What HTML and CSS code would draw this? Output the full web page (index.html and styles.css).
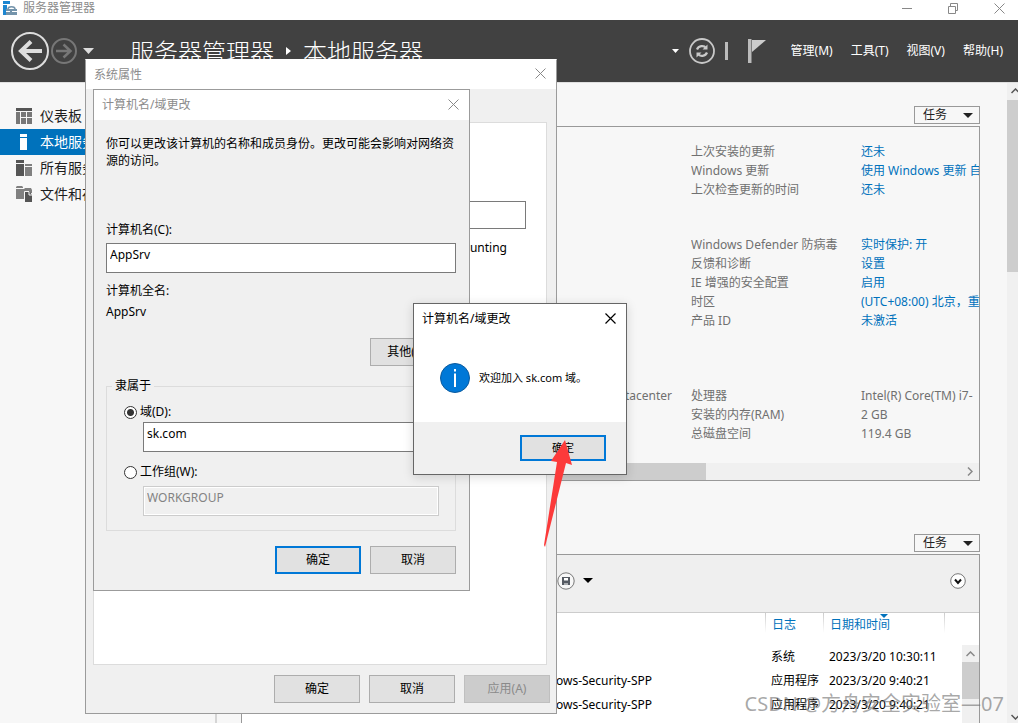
FILE: index.html
```html
<!DOCTYPE html>
<html lang="zh-CN">
<head>
<meta charset="utf-8">
<title>服务器管理器</title>
<link rel="stylesheet" href="styles.css">
</head>
<body>
<div class="app">
  <header class="titlebar">
    <svg class="app-icon" width="15" height="14" viewBox="0 0 15 14"><path d="M0 0h7v3H0zM0 4h4v10H0z" fill="#1c86d1"/><path d="M3 8h11v6H3z" fill="#7494ab"/><path d="M5 8c0-3 7-3 7 0" fill="none" stroke="#7494ab" stroke-width="1.5"/><path d="M3 10.5h4M9 10.5h5" stroke="#fff"/></svg>
    <span class="titlebar-text">服务器管理器</span>
    <div class="window-controls">
      <button type="button" aria-label="最小化"><svg width="11" height="11" viewBox="0 0 11 11"><path d="M0 5.5h10" stroke="#888"/></svg></button>
      <button type="button" aria-label="还原"><svg width="11" height="11" viewBox="0 0 11 11" fill="none" stroke="#888"><path d="M.5 3.500h7v7h-7zM2.500 3V.5h7v7H8"/></svg></button>
      <button type="button" aria-label="关闭"><svg width="11" height="11" viewBox="0 0 11 11"><path d="M.5.5l10 10M10.500.5l-10 10" stroke="#888"/></svg></button>
    </div>
  </header>

  <div class="banner">
    <div class="nav-buttons">
      <button type="button" aria-label="后退"><svg width="40" height="40" viewBox="0 0 40 40" fill="none" stroke="#ddd"><circle cx="20" cy="20" r="18" stroke-width="2"/><path d="M32 20H11" stroke-width="4"/><path d="M21 10.500L11 20l10 9.500" stroke-width="4"/></svg></button>
      <button type="button" aria-label="前进"><svg width="26" height="26" viewBox="0 0 26 26" fill="none" stroke="#777"><circle cx="13" cy="13" r="12" stroke-width="2"/><path d="M5 13h14M12.500 6.500l7 6.500-7 6.500" stroke-width="2.500"/></svg></button>
      <button type="button" aria-label="历史记录"><svg width="11" height="6" viewBox="0 0 11 6"><path d="M0 0h11L5.500 6z" fill="#ddd"/></svg></button>
    </div>
    <h1 class="crumbs"><span>服务器管理器</span><svg width="5" height="8" viewBox="0 0 5 8"><path d="M0 0l5 4-5 4z" fill="#fff"/></svg><span>本地服务器</span></h1>
    <div class="banner-tools">
      <svg width="7" height="4" viewBox="0 0 7 4"><path d="M0 0h7L3.500 4z" fill="#fff"/></svg>
      <button type="button" aria-label="刷新"><svg width="26" height="26" viewBox="0 0 26 26" fill="none" stroke="#c8c8c8"><circle cx="13" cy="13" r="12" stroke-width="1.800"/><path d="M8 11.500c1.500-4 7-4.500 9-1.500M18 14.500c-1.500 4-7 4.500-9 1.500" stroke-width="2.200"/><path d="M18.500 6.500v5h-5zM7.500 19.500v-5h5z" fill="#c8c8c8" stroke="none"/></svg></button>
      <span class="tool-divider"></span>
      <button type="button" aria-label="通知"><svg width="18" height="24" viewBox="0 0 18 24"><path d="M0 0h3.500v24H0z" fill="#bbb"/><path d="M4 1h14L4 13z" fill="#ccc"/></svg></button>
    </div>
    <nav class="menu">
      <button type="button">管理(M)</button>
      <button type="button">工具(T)</button>
      <button type="button">视图(V)</button>
      <button type="button">帮助(H)</button>
    </nav>
  </div>

  <div class="workspace">
    <nav class="sidebar">
      <a href="#dashboard"><svg width="16" height="16" viewBox="0 0 16 16"><path d="M0 0h16v3H0z" fill="#555"/><path d="M0 4h4v12H0zM5 4h5v5H5zM11 4h5v5h-5zM5 10h5v6H5zM11 10h5v6h-5z" fill="#777"/></svg>仪表板</a>
      <a class="selected" href="#local"><svg width="16" height="16" viewBox="0 0 16 16" fill="#fff"><path d="M4 0h7v3H4zM4 4h7v12H4z"/></svg>本地服务器</a>
      <a href="#all"><svg width="16" height="16" viewBox="0 0 16 16"><path d="M0 0h8v3H0zM0 4h8v12H0z" fill="#555"/><path d="M9 4h7v2H9zM9 7h7v9H9z" fill="#808080"/></svg>所有服务器</a>
      <a href="#files"><svg width="16" height="16" viewBox="0 0 16 16"><path d="M0 1l1-1h5l1 1v1H0zM0 3h8l1-1h6l1 2v3H8v6H0z" fill="#808080"/><path d="M9 6h5l2 3v7H9z" fill="#555"/><path d="M13 6v3h3M8.500 13V5.500H13" fill="none" stroke="#f7f7f7"/></svg>文件和存储服务</a>
    </nav>

    <main class="content">
      <button type="button" class="tasks">任务<svg width="10" height="5" viewBox="0 0 10 5"><path d="M0 0h10L5 5z" fill="#222"/></svg></button>
      <section class="panel">
        <div class="properties">
          <div class="prop-group">
            <span></span><span>上次安装的更新</span><a href="#u">还未</a>
            <span></span><span>Windows 更新</span><a href="#w">使用 Windows 更新 自</a>
            <span></span><span>上次检查更新的时间</span><a href="#c">还未</a>
          </div>
          <div class="prop-group">
            <span></span><span>Windows Defender 防病毒</span><a href="#d">实时保护: 开</a>
            <span></span><span>反馈和诊断</span><a href="#f">设置</a>
            <span></span><span>IE 增强的安全配置</span><a href="#i">启用</a>
            <span></span><span>时区</span><a href="#t">(UTC+08:00) 北京，重</a>
            <span></span><span>产品 ID</span><a href="#p">未激活</a>
          </div>
          <div class="prop-group">
            <span class="os">Datacenter</span><span>处理器</span><span>Intel(R) Core(TM) i7-</span>
            <span></span><span>安装的内存(RAM)</span><span>2 GB</span>
            <span></span><span>总磁盘空间</span><span>119.4 GB</span>
          </div>
        </div>
        <div class="hscroll"><span class="hthumb"></span><svg width="6" height="9" viewBox="0 0 6 9"><path d="M1 .5l4 4-4 4" fill="none" stroke="#888" stroke-width="1.500"/></svg></div>
      </section>

      <button type="button" class="tasks tasks-events">任务<svg width="10" height="5" viewBox="0 0 10 5"><path d="M0 0h10L5 5z" fill="#222"/></svg></button>
      <section class="panel events">
        <div class="toolbar">
          <button type="button" aria-label="保存查询"><svg width="18" height="18" viewBox="0 0 18 18"><circle cx="9" cy="9" r="8.200" fill="#f7f7f7" stroke="#777"/><path d="M5 5h8v8H5z" fill="#555a62"/><path d="M7 6h4v2.500H7zM7.500 11h1v2h-1zM9.500 11h1v2h-1z" fill="#fff"/></svg></button>
          <button type="button" aria-label="查询选项"><svg width="10" height="5" viewBox="0 0 10 5"><path d="M0 0h10L5 5z" fill="#000"/></svg></button>
          <button type="button" class="expand" aria-label="展开"><svg width="16" height="16" viewBox="0 0 16 16"><circle cx="8" cy="8" r="7.300" fill="#fff" stroke="#777"/><path d="M5 6.500l3 3.500 3-3.500" fill="none" stroke="#111" stroke-width="2"/></svg></button>
        </div>
        <div class="event-area">
          <table class="event-table">
            <thead><tr><th class="source"></th><th class="log">日志</th><th class="date">日期和时间<svg class="sort" width="8" height="4" viewBox="0 0 8 4"><path d="M0 0h8L4 4z" fill="#0072bc"/></svg></th><th></th></tr></thead>
            <tbody>
              <tr><td></td><td>系统</td><td>2023/3/20 10:30:11</td><td></td></tr>
              <tr><td>Windows-Security-SPP</td><td>应用程序</td><td>2023/3/20 9:40:21</td><td></td></tr>
              <tr><td>Windows-Security-SPP</td><td>应用程序</td><td>2023/3/20 9:40:21</td><td></td></tr>
            </tbody>
          </table>
          <div class="vscroll"><svg width="9" height="6" viewBox="0 0 9 6"><path d="M.5 5l4-4 4 4" fill="none" stroke="#888" stroke-width="1.500"/></svg><span class="vthumb"></span></div>
        </div>
      </section>
    </main>

    <div class="page-scroll">
      <svg width="9" height="6" viewBox="0 0 9 6"><path d="M.5 5l4-4 4 4" fill="none" stroke="#555" stroke-width="1.500"/></svg>
      <span class="page-thumb"></span>
      <svg width="9" height="6" viewBox="0 0 9 6"><path d="M.5 1l4 4 4-4" fill="none" stroke="#555" stroke-width="1.500"/></svg>
    </div>
  </div>

  <section class="dialog system" role="dialog" aria-label="系统属性">
    <div class="dialog-title"><span>系统属性</span><button type="button" aria-label="关闭"><svg width="11" height="11" viewBox="0 0 11 11"><path d="M.5.5l10 10M10.500.5l-10 10" stroke="#888"/></svg></button></div>
    <div class="tab-page">
      <input type="text" aria-label="计算机描述">
      <p>Accounting</p>
    </div>
    <div class="actions">
      <button type="button" class="btn">确定</button>
      <button type="button" class="btn">取消</button>
      <button type="button" class="btn" disabled>应用(A)</button>
    </div>
  </section>

  <section class="dialog rename" role="dialog" aria-label="计算机名/域更改">
    <div class="dialog-title"><span>计算机名/域更改</span><button type="button" aria-label="关闭"><svg width="11" height="11" viewBox="0 0 11 11"><path d="M.5.5l10 10M10.500.5l-10 10" stroke="#888"/></svg></button></div>
    <form class="rename-form">
      <p class="intro">你可以更改该计算机的名称和成员身份。更改可能会影响对网络资源的访问。</p>
      <label for="pc-name">计算机名(C):</label>
      <input id="pc-name" type="text" value="AppSrv">
      <p class="full-label">计算机全名:</p>
      <p class="full-name">AppSrv</p>
      <button type="button" class="btn more">其他(M)...</button>
      <fieldset>
        <legend>隶属于</legend>
        <label class="choice"><input type="radio" name="member" checked>域(D):</label>
        <input type="text" aria-label="域" value="sk.com">
        <label class="choice"><input type="radio" name="member">工作组(W):</label>
        <input type="text" aria-label="工作组" value="WORKGROUP" disabled>
      </fieldset>
      <div class="form-actions">
        <button type="button" class="btn primary">确定</button>
        <button type="button" class="btn">取消</button>
      </div>
    </form>
  </section>

  <section class="dialog message" role="alertdialog" aria-label="计算机名/域更改">
    <div class="dialog-title"><span>计算机名/域更改</span><button type="button" aria-label="关闭"><svg width="11" height="11" viewBox="0 0 11 11"><path d="M.5.5l10 10M10.500.5l-10 10" stroke="#000" stroke-width="1.200"/></svg></button></div>
    <div class="message-body">
      <svg width="30" height="30" viewBox="0 0 30 30"><circle cx="15" cy="15" r="14.500" fill="#0078d7" stroke="#0b5a9d"/><path d="M14 6h2v2.500h-2zM14 10.500h2V24h-2z" fill="#fff"/></svg>
      <p>欢迎加入 sk.com 域。</p>
    </div>
    <div class="message-footer"><button type="button" class="btn primary">确定</button></div>
  </section>

  <svg class="pointer" width="30" height="107" viewBox="0 0 30 107"><path d="M21 0L7 21l6 1L0 105l1 2L22 23l6 2z" fill="#fc3a3a"/></svg>
  <div class="watermark">CSDN @方舟安全实验室—07</div>
</div>
</body>
</html>
```
FILE: styles.css
```css
* { box-sizing: border-box; }
body {
  margin: 0;
  font: 12px/16px "Noto Sans", "Noto Sans CJK SC", sans-serif;
  color: #000;
}
p, h1 { margin: 0; }
a { color: #0072bc; text-decoration: none; }
button { font: inherit; color: inherit; padding: 0; border: 0; background: none; }
svg { display: block; flex: none; }

.app {
  position: relative;
  display: flex;
  flex-direction: column;
  height: 100vh;
  overflow: hidden;
  background: #f7f7f7;
}

/* title bar */
.titlebar { display: flex; align-items: center; height: 20px; padding: 0 13px 4px 3px; background: #fff; color: #8c8c8c; flex: none; }
.titlebar-text { margin-left: 5px; }
.window-controls { display: flex; gap: 35px; margin-left: auto; }

/* banner */
.banner { display: flex; align-items: center; height: 62px; padding: 0 15px 0 10px; background: #414141; color: #fff; flex: none; }
.nav-buttons { display: flex; align-items: center; gap: 1px; }
.nav-buttons button:last-child { margin-left: 5px; }
.crumbs { display: flex; align-items: center; gap: 12px; margin-left: 36px; font-size: 24px; line-height: 32px; font-weight: 300; white-space: nowrap; font-family: "Noto Sans CJK SC", sans-serif; }
.banner-tools { display: flex; align-items: center; gap: 10px; margin-left: auto; }
.tool-divider { width: 3px; height: 18px; background: #bbb; }
.banner-tools button:last-child { margin-left: 10px; }
.menu { display: flex; gap: 18px; margin-left: 25px; }

/* workspace */
.workspace { display: flex; flex: 1; min-height: 0; border-top: 1px solid #e0e0e0; }
.sidebar { width: 217px; flex: none; padding-top: 20px; border-right: 2px solid #d5d5d5; font-size: 14px; }
.sidebar a { display: flex; align-items: center; gap: 8px; height: 26px; padding-left: 16px; color: #1e1e1e; }
.sidebar .selected { background: #0072bc; color: #fff; }
.content { display: flex; flex-direction: column; flex: 1; min-width: 0; padding: 23px 27px 0 24px; }
.tasks { display: flex; align-items: center; justify-content: space-between; align-self: flex-end; width: 66px; height: 18px; flex: none; margin-bottom: 2px; padding: 0 6px 0 8px; border: 1px solid #999; color: #222; }
.tasks-events { margin-top: 53px; }
.panel { flex: none; border: 1px solid #999; }

.properties { display: flex; flex-direction: column; padding: 15px 0 20px; overflow: hidden; color: #707070; }
.prop-group { display: grid; grid-template-columns: 1fr 170px 118px; grid-auto-rows: 19px; line-height: 19px; white-space: nowrap; }
.prop-group > * { overflow: hidden; }
.prop-group:nth-child(2) { margin-top: 36px; }
.prop-group:nth-child(3) { margin-top: 56px; }
.os { padding-right: 19px; text-align: right; }
.hscroll { display: flex; align-items: center; justify-content: space-between; height: 17px; background: #f0f0f0; }
.hscroll svg { margin-right: 6px; }
.hthumb { width: 63%; height: 17px; background: #cdcdcd; }

.events { display: flex; flex-direction: column; flex: 1; min-height: 0; border-bottom: 0; }
.toolbar { display: flex; align-items: center; gap: 8px; height: 58px; flex: none; padding: 0 13px 6px 315px; background: #efefef; border-bottom: 1px solid #ccc; }
.expand { margin-left: auto; }
.event-area { display: flex; flex: 1; min-height: 0; overflow: hidden; background: #fff; }
.event-table { flex: 1; height: max-content; border-collapse: collapse; table-layout: fixed; white-space: nowrap; }
.event-table th { position: relative; height: 32px; padding: 0 0 8px 7px; color: #0072bc; font-weight: 400; text-align: left; background: linear-gradient(#ccc, #fff) left top / 1px 20px no-repeat; }
.event-table th.source { background: none; }
.event-table td { height: 24px; padding: 0 0 0 6px; }
.event-table td:first-child { padding: 0 113px 0 0; text-align: right; }
.log { width: 58px; }
.date { width: 121px; }
.event-table th:last-child { width: 18px; }
.sort { position: absolute; top: 1px; left: 57px; }
.vscroll { display: flex; flex-direction: column; align-items: center; width: 17px; margin-top: 32px; padding-top: 6px; background: #f0f0f0; }
.vthumb { width: 17px; height: 37px; margin-top: 5px; background: #cdcdcd; }

.page-scroll { display: flex; flex-direction: column; align-items: flex-start; width: 11px; padding: 5px 0 3px; background: #f0f0f0; overflow: hidden; }
.page-scroll svg { margin-left: 4px; }
.page-thumb { width: 100%; height: 172px; margin: 6px 0 auto; background: #cdcdcd; }

/* dialogs */
.dialog { position: absolute; display: flex; flex-direction: column; border: 1px solid #9b9b9b; background: #f0f0f0; }
.dialog-title { display: flex; align-items: center; justify-content: space-between; height: 30px; flex: none; padding: 0 10px 0 8px; background: #fff; color: #8c8c8c; }
.dialog-title button { margin-bottom: 2px; }
.btn { width: 86px; height: 28px; border: 1px solid #adadad; background: #e1e1e1; color: #000; }
.btn.primary { border: 2px solid #0078d7; }
.btn:disabled { background: #ccc; border-color: #bfbfbf; color: #8a8a8a; }
.dialog input[type="text"] { display: block; width: 100%; height: 30px; padding: 0 3px 7px; border: 1px solid #7a7a7a; border-radius: 0; background: #fff; color: #000; font: inherit; }
.dialog input[type="text"]:disabled { border-color: #ccc; background: #f0f0f0; color: #838383; box-shadow: inset 0 0 0 1px #fff; }

.system { left: 85px; top: 59px; width: 472px; height: 655px; border-top-color: #fff; }
.system .dialog-title { height: 29px; }
.tab-page { flex: 1; margin: 33px 9px 0 7px; padding: 78px 20px 0 12px; border: 1px solid #dcdcdc; background: #fff; }
.dialog .tab-page input[type="text"] { height: 28px; }
.tab-page p { margin-top: 11px; padding-right: 19px; text-align: right; }
.actions { display: flex; justify-content: flex-end; gap: 9px; padding: 10px 6px; }

.rename { left: 93px; top: 89px; width: 377px; height: 502px; }
.rename-form { display: flex; flex-direction: column; padding: 15px 13px 0 12px; }
.intro { min-height: 34px; margin-bottom: 53px; line-height: 17px; }
.rename-form label[for] { margin-bottom: 5px; }
.full-label { margin-top: 10px; }
.full-name { margin: 5px 0 18px; }
.more { align-self: flex-end; }
fieldset { margin: 12px 0 0; padding: 10px 16px 14px 17px; border: 1px solid #dcdcdc; }
legend { padding: 0 3px; margin-left: -12px; }
.choice { display: flex; align-items: center; gap: 3px; margin-bottom: 2px; }
.dialog fieldset input[type="text"] { width: calc(100% - 19px); margin-left: 19px; }
fieldset input[type="text"] + .choice { margin-top: 12px; margin-bottom: 6px; }
input[type="radio"] { appearance: none; width: 13px; height: 13px; margin: 0; border: 1px solid #333; border-radius: 50%; background: #fff; }
input[type="radio"]:checked { background: radial-gradient(circle, #333 3px, #fff 4px); }
.form-actions { display: flex; justify-content: flex-end; gap: 9px; margin-top: 15px; }

.message { left: 413px; top: 303px; width: 214px; height: 172px; border-color: #666; font-size: 11px; box-shadow: 0 2px 10px rgba(0, 0, 0, .15); }
.message .dialog-title { color: #000; font-size: 12px; }
.message-body { display: flex; align-items: center; gap: 9px; flex: 1; padding: 0 0 0 26px; background: #fff; }
.message-footer { display: flex; justify-content: flex-end; padding: 13px 20px; }
.message-footer .btn { height: 26px; }

.pointer { position: absolute; left: 544px; top: 440px; }
.watermark { position: absolute; right: 14px; bottom: 6px; font-size: 20px; line-height: 26px; color: rgba(110, 110, 110, .6); white-space: nowrap; }
```
